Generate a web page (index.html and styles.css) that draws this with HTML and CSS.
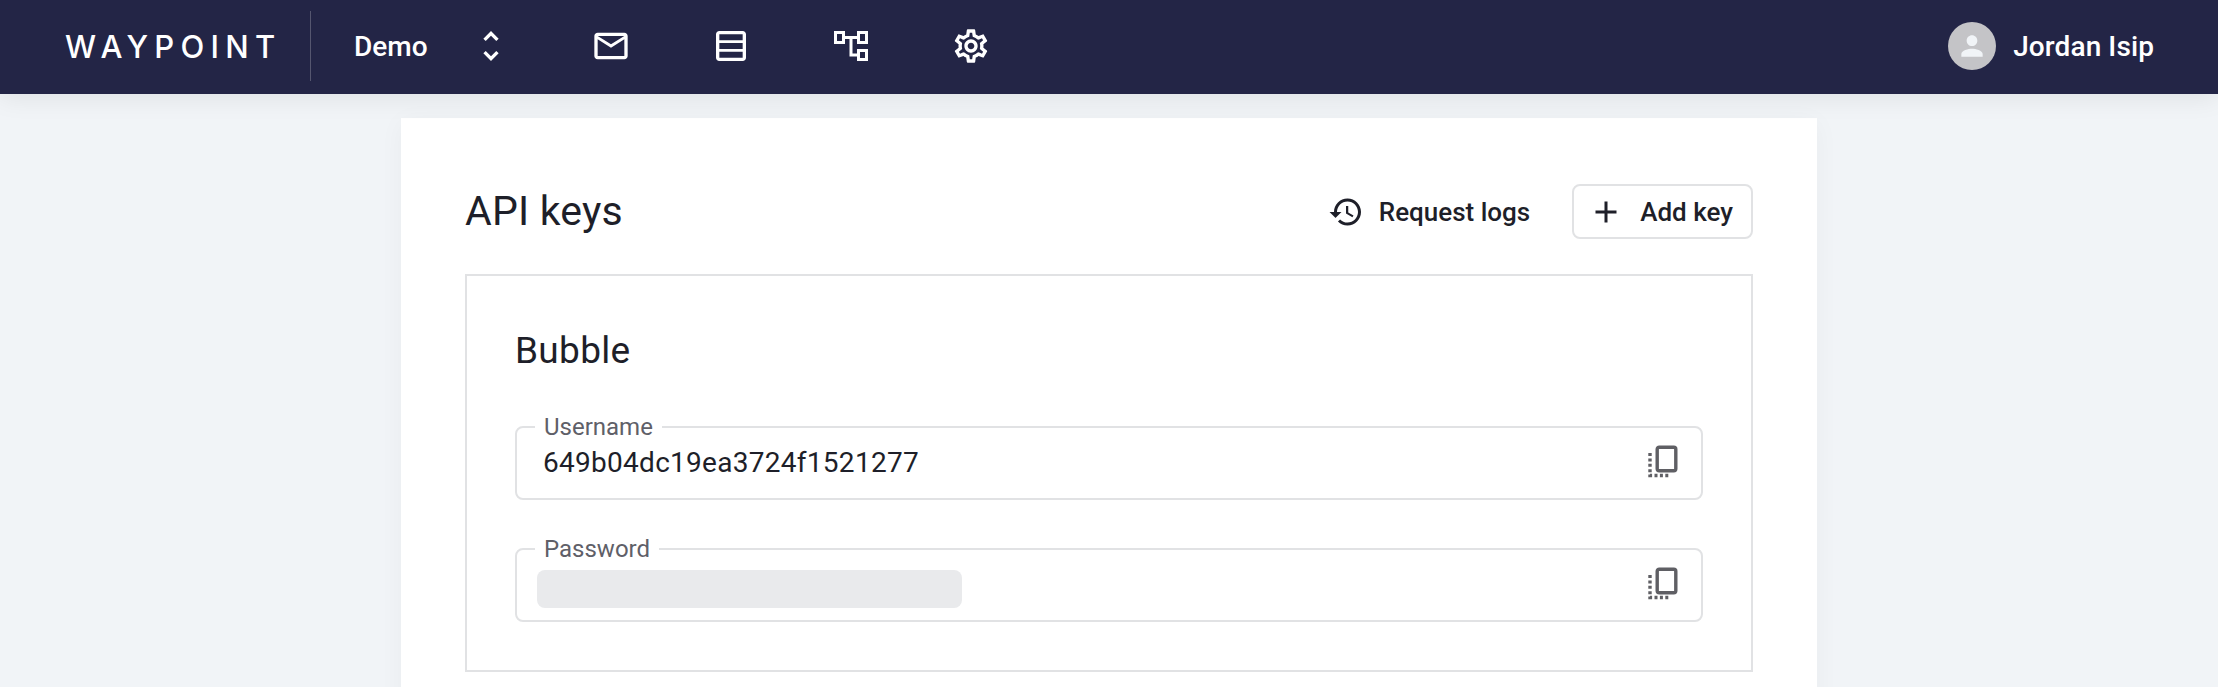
FILE: index.html
```html
<!DOCTYPE html>
<html lang="en">
<head>
	<meta charset="UTF-8">
	<title>API keys</title>
	<link rel="stylesheet" href="styles.css">
</head>
<body>
	<header class="topbar">
		<div class="logo">WAYPOINT</div>
		<div class="project">
			<span class="project-name">Demo</span>
			<svg class="chevrons" viewBox="0 0 24 24"><path d="M12 5.83L15.17 9l1.41-1.41L12 3 7.41 7.59 8.83 9 12 5.83zm0 12.34L8.83 15l-1.41 1.41L12 21l4.59-4.59L15.17 15 12 18.17z"/></svg>
		</div>
		<nav class="nav">
			<a class="nav-item"><svg viewBox="0 0 24 24"><path d="M20 4H4c-1.1 0-1.99.9-1.99 2L2 18c0 1.1.9 2 2 2h16c1.1 0 2-.9 2-2V6c0-1.1-.9-2-2-2zm0 14H4V8l8 5 8-5v10zm-8-7L4 6h16l-8 5z"/></svg></a>
			<a class="nav-item"><svg viewBox="0 0 24 24"><path d="M19 3H5c-1.1 0-2 .9-2 2v14c0 1.1.9 2 2 2h14c1.1 0 2-.9 2-2V5c0-1.1-.9-2-2-2zM5 5h14v3.5H5V5zm0 5.25h14v3.5H5v-3.5zM5 19v-3.5h14V19H5z"/></svg></a>
			<a class="nav-item"><svg viewBox="0 0 40 40"><path class="tree" d="M4.500 6.500h8v10h-8zM27.500 6.500h8v10h-8zM27.500 24.500h8v9h-8zM12.500 11.500h15M20 11.500V29h7.500"/></svg></a>
			<a class="nav-item"><svg viewBox="0 0 24 24"><path d="M19.43 12.98c.04-.32.07-.64.07-.98 0-.34-.03-.66-.07-.98l2.11-1.65c.19-.15.24-.42.12-.64l-2-3.46c-.09-.16-.26-.25-.44-.25-.06 0-.12.01-.17.03l-2.49 1c-.52-.4-1.08-.73-1.69-.98l-.38-2.65C14.46 2.18 14.25 2 14 2h-4c-.25 0-.46.18-.49.42l-.38 2.65c-.61.25-1.17.59-1.69.98l-2.49-1c-.06-.02-.12-.03-.18-.03-.17 0-.34.09-.43.25l-2 3.46c-.13.22-.07.49.12.64l2.11 1.65c-.04.32-.07.65-.07.98 0 .33.03.66.07.98l-2.11 1.65c-.19.15-.24.42-.12.64l2 3.46c.09.16.26.25.44.25.06 0 .12-.01.17-.03l2.49-1c.52.4 1.08.73 1.69.98l.38 2.65c.03.24.24.42.49.42h4c.25 0 .46-.18.49-.42l.38-2.65c.61-.25 1.17-.59 1.69-.98l2.49 1c.06.02.12.03.18.03.17 0 .34-.09.43-.25l2-3.46c.12-.22.07-.49-.12-.64l-2.11-1.65zm-1.98-1.71c.04.31.05.52.05.73 0 .21-.02.43-.05.73l-.14 1.13.89.7 1.08.84-.7 1.21-1.27-.51-1.04-.42-.9.68c-.43.32-.84.56-1.25.73l-1.06.43-.16 1.13-.2 1.35h-1.4l-.19-1.35-.16-1.13-1.06-.43c-.43-.18-.83-.41-1.23-.71l-.91-.7-1.06.43-1.27.51-.7-1.21 1.08-.84.89-.7-.14-1.13c-.03-.31-.05-.54-.05-.74s.02-.43.05-.73l.14-1.13-.89-.7-1.08-.84.7-1.21 1.27.51 1.04.42.9-.68c.43-.32.84-.56 1.25-.73l1.06-.43.16-1.13.2-1.35h1.39l.19 1.35.16 1.13 1.06.43c.43.18.83.41 1.23.71l.91.7 1.06-.43 1.27-.51.7 1.21-1.07.85-.89.7.14 1.13zM12 8c-2.21 0-4 1.79-4 4s1.79 4 4 4 4-1.79 4-4-1.79-4-4-4zm0 6c-1.1 0-2-.9-2-2s.9-2 2-2 2 .9 2 2-.9 2-2 2z"/></svg></a>
		</nav>
		<div class="user">
			<span class="avatar"><svg viewBox="0 0 24 24"><path d="M12 12c2.210 0 4-1.790 4-4s-1.790-4-4-4-4 1.790-4 4 1.790 4 4 4zm0 2c-2.670 0-8 1.340-8 4v2h16v-2c0-2.660-5.330-4-8-4z"/></svg></span>
			<span class="user-name">Jordan Isip</span>
		</div>
	</header>

	<main class="page">
		<section class="card">
			<div class="card-head">
				<h1 class="title">API keys</h1>
				<a class="btn-text">
					<svg viewBox="0 0 24 24"><path d="M13 3c-4.970 0-9 4.030-9 9H1l3.890 3.890.07.140L9 12H6c0-3.870 3.130-7 7-7s7 3.130 7 7-3.130 7-7 7c-1.930 0-3.680-.790-4.940-2.060l-1.420 1.420C8.270 19.990 10.510 21 13 21c4.970 0 9-4.030 9-9s-4.030-9-9-9zm-1 5v5l4.280 2.540.720-1.210-3.500-2.080V8H12z"/></svg>
					Request logs
				</a>
				<a class="btn-outline">
					<svg viewBox="0 0 24 24"><path d="M19 13h-6v6h-2v-6H5v-2h6V5h2v6h6v2z"/></svg>
					Add key
				</a>
			</div>

			<div class="key-box">
				<h2 class="key-name">Bubble</h2>

				<fieldset class="field">
					<legend>Username</legend>
					<div class="field-row">
						<span class="field-value">649b04dc19ea3724f1521277</span>
						<svg class="copy" viewBox="0 0 32 34"><rect x="10.200" y="2.200" width="18.600" height="23.600" rx="2"/><path class="dots" d="M3 8v22.500h20"/></svg>
					</div>
				</fieldset>

				<fieldset class="field">
					<legend>Password</legend>
					<div class="field-row">
						<span class="field-hidden"></span>
						<svg class="copy" viewBox="0 0 32 34"><rect x="10.200" y="2.200" width="18.600" height="23.600" rx="2"/><path class="dots" d="M3 8v22.500h20"/></svg>
					</div>
				</fieldset>
			</div>
		</section>
	</main>
</body>
</html>
```

FILE: styles.css
```css
html, body{
	height: 100%;
}
body{
	margin: 0;
	overflow: hidden;
	background-color: #f1f4f7;
	color: #1e1f29;
	font-family: Roboto, "Liberation Sans", sans-serif;
}
.topbar{
	position: relative;
	z-index: 2;
	display: flex;
	align-items: center;
	box-sizing: border-box;
	height: 94px;
	padding: 0 64px 2px 65px;
	background-color: #232546;
	color: #fff;
	box-shadow: 0 4px 24px rgba(0, 0, 0, 0.08);
}
.logo{
	display: flex;
	align-items: center;
	width: 245px;
	height: 70px;
	margin-right: 43px;
	border-right: 1px solid #55566f;
	font-family: Inter, sans-serif;
	font-size: 31px;
	font-weight: 500;
	letter-spacing: 6.3px;
}
.project{
	display: flex;
	align-items: center;
}
.project-name{
	width: 117px;
	font-size: 28px;
	font-weight: 500;
}
.chevrons{
	width: 40px;
	height: 40px;
	fill: #fff;
}
.nav{
	display: flex;
	margin-left: 40px;
}
.nav-item{
	display: flex;
	justify-content: center;
	width: 120px;
}
.nav-item svg{
	width: 40px;
	height: 40px;
	fill: #fff;
}
.nav-item .tree{
	fill: none;
	stroke: #fff;
	stroke-width: 3;
}
.user{
	display: flex;
	align-items: center;
	margin-left: auto;
}
.avatar{
	display: flex;
	align-items: center;
	justify-content: center;
	width: 48px;
	height: 48px;
	margin-right: 17px;
	border-radius: 50%;
	background-color: #c4c4c7;
}
.avatar svg{
	width: 32px;
	height: 32px;
	fill: #f1f4f7;
}
.user-name{
	font-size: 28px;
	font-weight: 500;
	letter-spacing: 0.1px;
}

.page{
	display: flex;
	justify-content: center;
	padding-top: 24px;
}
.card{
	width: 1288px;
	height: 569px;
	padding: 66px 64px 0;
	background-color: #fff;
	box-shadow: 0 4px 24px rgba(0, 0, 0, 0.04);
}
.card-head{
	display: flex;
	align-items: center;
	height: 55px;
	margin-bottom: 35px;
}
.title{
	margin: -2px auto 0 0;
	font-size: 41px;
	font-weight: 400;
	letter-spacing: 0.2px;
}
.btn-text, .btn-outline{
	display: flex;
	align-items: center;
	font-size: 26px;
	font-weight: 500;
}
.btn-text{
	margin-right: 42px;
}
.btn-text svg, .btn-outline svg{
	width: 36px;
	height: 36px;
	fill: #1e1f29;
}
.btn-text svg{
	margin-right: 15px;
}
.btn-outline{
	box-sizing: border-box;
	height: 55px;
	padding: 0 18px 0 14px;
	border: 2px solid #e1e2e4;
	border-radius: 8px;
}
.btn-outline svg{
	margin-right: 16px;
}
.key-box{
	height: 398px;
	box-sizing: border-box;
	padding: 50px 48px;
	border: 2px solid #e1e2e4;
}
.key-name{
	margin: 0 0 39px;
	font-size: 37px;
	line-height: 50px;
	font-weight: 400;
	letter-spacing: 0.3px;
}
.field{
	min-width: 0;
	height: 85px;
	box-sizing: border-box;
	margin: 0 0 37px;
	padding: 2px 20px 0;
	border: 2px solid #e1e2e4;
	border-radius: 8px;
}
.field legend{
	margin-left: -2px;
	padding: 0 9px;
	color: #5f6068;
	font-size: 24px;
	line-height: 24px;
}
.field-row{
	display: flex;
	align-items: center;
	justify-content: space-between;
	height: 46px;
}
.field-value{
	margin-top: -3px;
	margin-left: 6px;
	font-size: 28px;
	letter-spacing: 0.28px;
}
.field-hidden{
	width: 425px;
	height: 38px;
	margin-top: 5px;
	border-radius: 8px;
	background-color: #e9eaec;
}
.copy{
	width: 32px;
	height: 34px;
	margin-top: -4px;
	margin-right: 2px;
	fill: none;
	stroke: #5f5f64;
	stroke-width: 3.4;
}
.copy .dots{
	stroke-dasharray: 3 2.4;
}
```
